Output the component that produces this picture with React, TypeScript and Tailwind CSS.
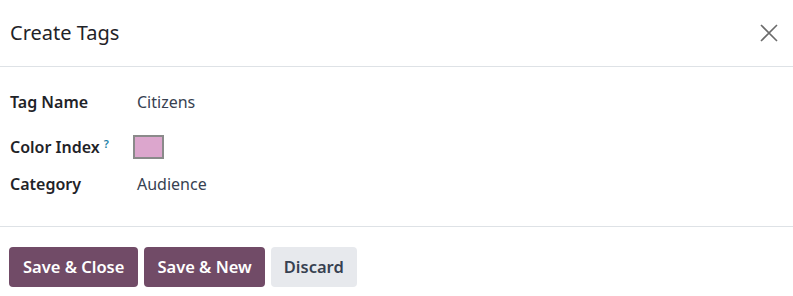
import React from 'react';

const font = { fontFamily: '"Noto Sans", "Open Sans", sans-serif' };

const Field: React.FC<{ label: string; help?: boolean; children: React.ReactNode; className?: string }> = ({ label, help, children, className }) => (
    <div className={`flex items-center ${className ?? ''}`}>
        <div className="w-[127px] text-[16px] font-semibold text-[#1f2328]">
            {label}
            {help && <sup className="ml-1 text-[11px] font-semibold text-[#1b7fa6]">?</sup>}
        </div>
        <div className="text-[16px] text-[#374151]">{children}</div>
    </div>
);

const App: React.FC = () => {
    return (
        <div className="w-[793px] h-[296px] bg-white" style={font}>
            <div className="flex items-center justify-between h-[67px] pl-[10px] pr-[14px] border-b border-[#dee2e6]">
                <h1 className="text-[20px] text-[#1f2328]">Create Tags</h1>
                <svg width="20" height="20" viewBox="0 0 20 20" className="text-[#6b6b6b]">
                    <path d="M2 2 L18 18 M18 2 L2 18" stroke="currentColor" strokeWidth="1.6" />
                </svg>
            </div>
            <div className="h-[160px] border-b border-[#dee2e6] pl-[10px] pt-[22px]">
                <Field label="Tag Name" className="h-[26px]">Citizens</Field>
                <Field label="Color Index" help className="h-[26px] mt-[19px]">
                    <div className="-ml-[4px] w-[31px] h-[24px] border-2 border-[#8a8a8a] bg-[#dca6cd]" />
                </Field>
                <Field label="Category" className="h-[26px] mt-[11px]">Audience</Field>
            </div>
            <div className="flex gap-[6px] pl-[9px] pt-[20px]">
                <button className="h-[40px] px-[14px] rounded-[4px] bg-[#714b67] text-white text-[16.5px] font-semibold">Save &amp; Close</button>
                <button className="h-[40px] px-[13px] rounded-[4px] bg-[#714b67] text-white text-[16.5px] font-semibold">Save &amp; New</button>
                <button className="h-[40px] px-[13px] rounded-[4px] bg-[#e7e9ed] text-[#374151] text-[16.5px] font-semibold">Discard</button>
            </div>
        </div>
    );
};

export default App;
